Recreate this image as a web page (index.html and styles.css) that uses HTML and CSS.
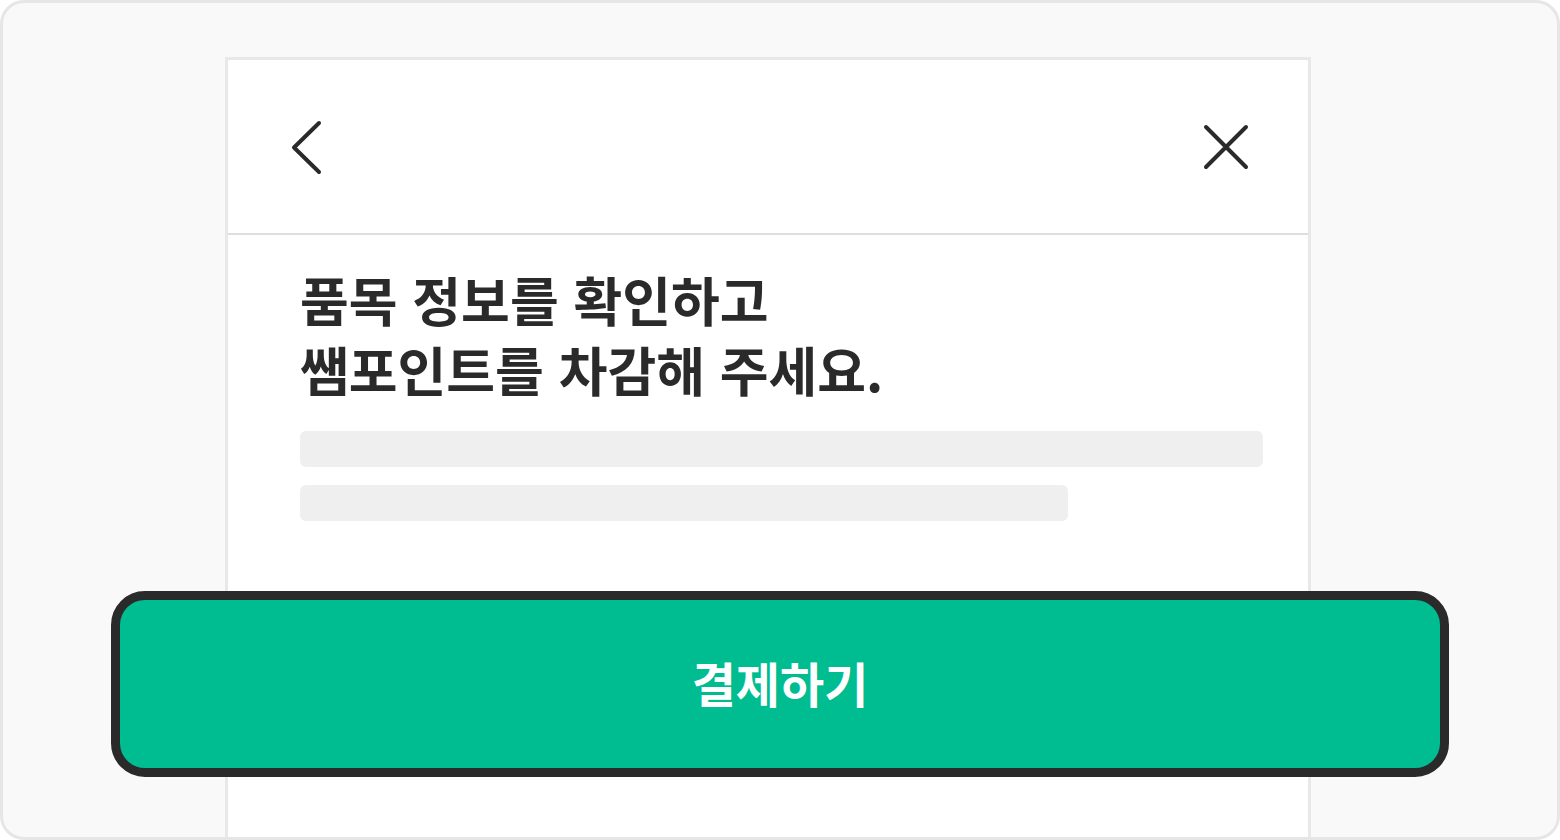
FILE: index.html
```html
<!DOCTYPE html>
<html lang="ko">
<head>
<meta charset="utf-8">
<title>결제하기</title>
<link rel="stylesheet" href="styles.css">
</head>
<body>
<div class="frame">
  <div class="panel">
    <header class="panel-header">
      <svg class="icon" width="56" height="56" viewBox="0 0 56 56" aria-label="뒤로">
        <polyline points="41,4 16,28.5 41,53" fill="none" stroke="#2a2a2a" stroke-width="4" stroke-linecap="round" stroke-linejoin="round"/>
      </svg>
      <svg class="icon" width="56" height="56" viewBox="0 0 56 56" aria-label="닫기">
        <path d="M8 8 L48 48 M48 8 L8 48" fill="none" stroke="#2a2a2a" stroke-width="4" stroke-linecap="round"/>
      </svg>
    </header>
    <section class="panel-body">
      <h1 class="title">품목 정보를 확인하고<br>쌤포인트를 차감해 주세요.</h1>
      <div class="skeleton skeleton-full"></div>
      <div class="skeleton skeleton-short"></div>
    </section>
  </div>
  <button class="pay-button" type="button">결제하기</button>
</div>
</body>
</html>
```

FILE: styles.css
```css
* {
  box-sizing: border-box;
}

html, body {
  margin: 0;
  padding: 0;
  background: #ffffff;
}

body {
  font-family: "Noto Sans CJK KR", "Noto Sans", sans-serif;
  color: #2a2a2a;
}

.frame {
  position: relative;
  width: 1560px;
  height: 840px;
  border: 3px solid #e6e6e6;
  border-radius: 24px;
  background: #f9f9f9;
  overflow: hidden;
  padding: 54px 0 0 222px;
}

.panel {
  width: 1086px;
  height: 800px;
  background: #ffffff;
  border: 3px solid #e8e8e8;
  border-bottom: none;
}

.panel-header {
  height: 175px;
  border-bottom: 2px solid #dedede;
  display: flex;
  align-items: center;
  justify-content: space-between;
  padding: 0 54px 0 50px;
}

.icon {
  display: block;
}

.panel-body {
  padding: 29px 45px 0 72px;
}

.title {
  margin: 0;
  font-size: 53px;
  line-height: 70px;
  font-weight: 700;
  color: #2a2a2a;
}

.skeleton {
  height: 36px;
  border-radius: 6px;
  background: #efefef;
}

.skeleton-full {
  margin-top: 27px;
  width: 100%;
}

.skeleton-short {
  margin-top: 18px;
  width: 768px;
}

.pay-button {
  position: absolute;
  left: 108px;
  top: 588px;
  width: 1338px;
  height: 186px;
  border: 9px solid #2a2a2a;
  border-radius: 34px;
  background: #00bc91;
  color: #ffffff;
  font-family: "Noto Sans CJK KR", "Noto Sans", sans-serif;
  font-size: 48px;
  font-weight: 700;
  display: flex;
  align-items: center;
  justify-content: center;
  padding: 0 0 4px 0;
}
```
